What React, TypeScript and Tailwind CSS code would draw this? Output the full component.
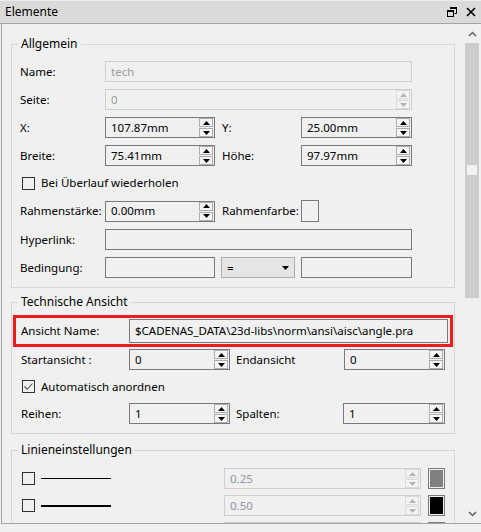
import React from "react";

function Arrow({ dir, color }: { dir: "up" | "down"; color: string }) {
  return (
    <svg width="7" height="4" viewBox="0 0 7 4">
      {dir === "up" ? <path d="M0 4 L3.5 0 L7 4 Z" fill={color} /> : <path d="M0 0 L7 0 L3.5 4 Z" fill={color} />}
    </svg>
  );
}

function Spin({ disabled = false }: { disabled?: boolean }) {
  const c = disabled ? "#b4b4b4" : "#000000";
  const box = disabled
    ? "h-[9px] border border-[#dadada] bg-[#f3f3f3] flex items-center justify-center"
    : "h-[9px] border border-[#adadad] bg-[#f5f5f5] flex items-center justify-center";
  return (
    <div className="flex flex-col gap-[1px] w-[14px] mr-[1px]">
      <div className={box}>
        <Arrow dir="up" color={c} />
      </div>
      <div className={box}>
        <Arrow dir="down" color={c} />
      </div>
    </div>
  );
}

function Field({
  w,
  value = "",
  spin = false,
  disabled = false,
  gray = false,
}: {
  w: string;
  value?: string;
  spin?: boolean;
  disabled?: boolean;
  gray?: boolean;
}) {
  const border = disabled ? "border-[#cfcfcf]" : "border-[#7a7a7a]";
  const text = disabled ? (gray ? "text-[#8e98a8]" : "text-[#9d9d9d]") : "text-black";
  return (
    <div className={`${w} h-[21px] flex items-center border ${border} pl-[5px] shrink-0`}>
      <span className={`flex-1 ${text} whitespace-nowrap overflow-hidden`}>{value}</span>
      {spin && <Spin disabled={disabled} />}
    </div>
  );
}

function Check({ checked = false }: { checked?: boolean }) {
  return (
    <div className="w-[13px] h-[13px] border border-[#333333] shrink-0 flex items-center justify-center">
      {checked && (
        <svg width="11" height="11" viewBox="0 0 11 11">
          <path d="M1.5 5.5 L4.2 8.3 L9.5 2.5" fill="none" stroke="#4a4a4a" strokeWidth="1.1" />
        </svg>
      )}
    </div>
  );
}

function Group({ title, className, children }: { title: string; className: string; children: React.ReactNode }) {
  return (
    <fieldset className={`w-[444px] border border-[#d6d6d6] ${className}`}>
      <legend className="ml-[6px] px-[3px] h-[16px] leading-[16px] text-[12px]">{title}</legend>
      {children}
    </fieldset>
  );
}

function Label({ w, children }: { w: string; children: React.ReactNode }) {
  return <div className={`${w} shrink-0 whitespace-nowrap`}>{children}</div>;
}

export default function App() {
  return (
    <div className="w-[481px] h-[532px] bg-[#f0f0f0] text-[11.5px] text-black font-['Segoe_UI','Noto_Sans',sans-serif] overflow-hidden">
      {/* title bar */}
      <div className="h-[24px] flex items-center justify-between bg-[#dadada] border-t border-t-[#ececec] border-b border-b-[#a3a3a3] pl-[5px] pr-[5px] text-[12px]">
        <span>Elemente</span>
        <div className="flex items-center gap-[9px]">
          <svg width="10" height="10" viewBox="0 0 10 10">
            <path d="M3.5 0.5 H9.5 V6.5 H7.5" fill="none" stroke="#000" />
            <rect x="3" y="0" width="7" height="2" fill="#000" />
            <rect x="0.5" y="3.5" width="6" height="6" fill="#dadada" stroke="#000" />
            <rect x="0" y="3" width="7" height="2" fill="#000" />
          </svg>
          <svg width="10" height="10" viewBox="0 0 10 10">
            <path d="M1 1 L9 9 M9 1 L1 9" stroke="#000" strokeWidth="1.6" />
          </svg>
        </div>
      </div>

      {/* panel */}
      <div className="ml-[1px] h-[500px] flex border-l border-b border-[#a3a3a3]">
        <div className="w-[461px] overflow-hidden">
          <div className="ml-[9px] flex flex-col">
            {/* Allgemein */}
            <Group title="Allgemein" className="mt-[12px]">
              <div className="pl-[8px] pt-[9px] pb-[9px] flex flex-col gap-[7px]">
                <div className="flex items-center">
                  <Label w="w-[85px]">Name:</Label>
                  <Field w="w-[307px]" value="tech" disabled />
                </div>
                <div className="flex items-center">
                  <Label w="w-[85px]">Seite:</Label>
                  <Field w="w-[307px]" value="0" disabled spin />
                </div>
                <div className="flex items-center">
                  <Label w="w-[85px]">X:</Label>
                  <Field w="w-[110px]" value="107.87mm" spin />
                  <Label w="w-[79px] ml-[7px]">Y:</Label>
                  <Field w="w-[111px]" value="25.00mm" spin />
                </div>
                <div className="flex items-center">
                  <Label w="w-[85px]">Breite:</Label>
                  <Field w="w-[110px]" value="75.41mm" spin />
                  <Label w="w-[79px] ml-[7px]">Höhe:</Label>
                  <Field w="w-[111px]" value="97.97mm" spin />
                </div>
                <div className="h-[20px] flex items-center pl-[2px]">
                  <Check />
                  <span className="ml-[6px]">Bei Überlauf wiederholen</span>
                </div>
                <div className="flex items-center">
                  <Label w="w-[85px]">Rahmenstärke:</Label>
                  <Field w="w-[110px]" value="0.00mm" spin />
                  <Label w="w-[79px] ml-[7px]">Rahmenfarbe:</Label>
                  <div className="w-[18px] h-[22px] border border-[#7a7a7a]" />
                </div>
                <div className="flex items-center">
                  <Label w="w-[85px]">Hyperlink:</Label>
                  <Field w="w-[307px]" />
                </div>
                <div className="flex items-center">
                  <Label w="w-[85px]">Bedingung:</Label>
                  <Field w="w-[110px]" />
                  <div className="ml-[6px] w-[74px] h-[21px] border border-[#adadad] bg-[#e5e5e5] flex items-center justify-between pl-[5px] pr-[5px]">
                    <span>=</span>
                    <svg width="7" height="4" viewBox="0 0 7 4">
                      <path d="M0 0 L7 0 L3.5 4 Z" fill="#000" />
                    </svg>
                  </div>
                  <Field w="w-[111px] ml-[6px]" />
                </div>
              </div>
            </Group>

            {/* Technische Ansicht */}
            <Group title="Technische Ansicht" className="mt-[6px]">
              <div className="pt-[5px] pb-[9px] flex flex-col">
                <div className="ml-[1px] w-[440px] h-[32px] border-[3px] border-[#ee1c1c] flex items-center pl-[5px]">
                  <Label w="w-[108px]">Ansicht Name:</Label>
                  <div className="w-[319px] h-[24px] border border-[#7a7a7a] flex items-center pl-[5px] whitespace-nowrap">
                    $CADENAS_DATA\23d-libs\norm\ansi\aisc\angle.pra
                  </div>
                </div>
                <div className="mt-[2px] pl-[9px] flex items-center">
                  <Label w="w-[108px]">Startansicht :</Label>
                  <Field w="w-[101px]" value="0" spin />
                  <Label w="w-[108px] ml-[6px]">Endansicht</Label>
                  <Field w="w-[101px]" value="0" spin />
                </div>
                <div className="h-[33px] pl-[10px] flex items-center">
                  <Check checked />
                  <span className="ml-[6px]">Automatisch anordnen</span>
                </div>
                <div className="pl-[9px] flex items-center">
                  <Label w="w-[108px]">Reihen:</Label>
                  <Field w="w-[101px]" value="1" spin />
                  <Label w="w-[107px] ml-[6px]">Spalten:</Label>
                  <Field w="w-[102px]" value="1" spin />
                </div>
              </div>
            </Group>

            {/* Linieneinstellungen */}
            <Group title="Linieneinstellungen" className="mt-[8px]">
              <div className="pl-[10px] pt-[10px] pb-[9px] flex flex-col gap-[6px]">
                {[
                  { v: "0.25", line: "h-[1px]", sw: "bg-[#808080]" },
                  { v: "0.50", line: "h-[2px]", sw: "bg-black" },
                  { v: "", line: "h-[3px]", sw: "bg-black" },
                ].map((r, i) => (
                  <div key={i} className="flex items-center">
                    <Check />
                    <div className={`ml-[6px] w-[70px] ${r.line} bg-black`} />
                    <Field w="w-[197px] ml-[113px]" value={r.v} disabled gray spin />
                    <div className="ml-[7px] w-[17px] h-[21px] border border-[#7a7a7a] p-[1px]">
                      <div className={`w-full h-full ${r.sw}`} />
                    </div>
                  </div>
                ))}
              </div>
            </Group>
          </div>
        </div>

        {/* scrollbar */}
        <div className="w-[17px] flex flex-col pl-[2px] pr-[1px]">
          <div className="h-[19px] flex items-center justify-center">
            <svg width="9" height="6" viewBox="0 0 9 6">
              <path d="M1 5 L4.5 1.5 L8 5" fill="none" stroke="#606060" strokeWidth="1.5" />
            </svg>
          </div>
          <div className="h-[255px] bg-[#cdcdcd] flex flex-col items-center pt-[122px]">
            <div className="w-[10px] h-[10px] bg-[#f2f2f2]" />
          </div>
          <div className="flex-1" />
          <div className="h-[18px] flex items-center justify-center">
            <svg width="9" height="6" viewBox="0 0 9 6">
              <path d="M1 1 L4.5 4.5 L8 1" fill="none" stroke="#606060" strokeWidth="1.5" />
            </svg>
          </div>
        </div>
      </div>
    </div>
  );
}
